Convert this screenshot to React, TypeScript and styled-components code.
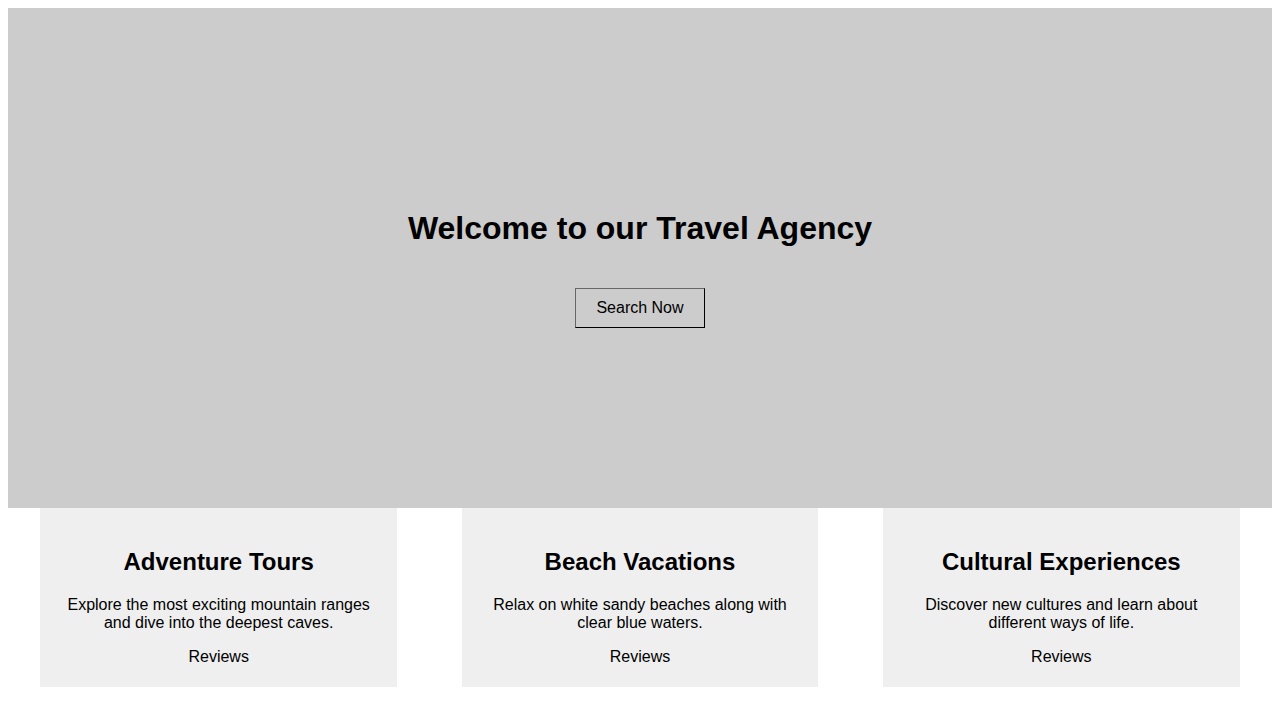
import React from "react";
import styled, { createGlobalStyle } from "styled-components";

const Global = createGlobalStyle`
  body {
    margin: 8px;
    font-family: "Liberation Sans", Arial, sans-serif;
    color: #000;
    background: #fff;
  }
`;

const Hero = styled.section`
  height: 500px;
  background: #cccccc;
  display: flex;
  flex-direction: column;
  align-items: center;
  justify-content: center;
  text-align: center;
`;

const Title = styled.h1`
  font-size: 32px;
  font-weight: bold;
  margin: 21.44px 0;
  line-height: 37px;
`;

const SearchButton = styled.button`
  margin-top: 20px;
  padding: 10px 20px;
  font-family: "Liberation Sans", Arial, sans-serif;
  font-size: 16px;
  line-height: normal;
  color: #000;
  background: transparent;
  border-width: 1px;
  border-style: solid;
  border-color: #666 #000 #000 #666;
  cursor: pointer;
`;

const Cards = styled.section`
  display: flex;
  justify-content: space-around;
`;

const Card = styled.div`
  width: 356.4px;
  box-sizing: border-box;
  padding: 20.5px 20px;
  background: #efefef;
  text-align: center;
`;

const CardTitle = styled.h2`
  font-size: 24px;
  font-weight: bold;
  margin: 19.92px 0;
  line-height: normal;
`;

const CardText = styled.p`
  font-size: 16px;
  line-height: normal;
  margin: 16px 0;
`;

const Reviews = styled.div`
  font-size: 16px;
  line-height: normal;
`;

const items = [
  {
    title: "Adventure Tours",
    text: "Explore the most exciting mountain ranges and dive into the deepest caves.",
  },
  {
    title: "Beach Vacations",
    text: "Relax on white sandy beaches along with clear blue waters.",
  },
  {
    title: "Cultural Experiences",
    text: "Discover new cultures and learn about different ways of life.",
  },
];

export default function App() {
  return (
    <>
      <Global />
      <Hero>
        <Title>Welcome to our Travel Agency</Title>
        <SearchButton>Search Now</SearchButton>
      </Hero>
      <Cards>
        {items.map((it) => (
          <Card key={it.title}>
            <CardTitle>{it.title}</CardTitle>
            <CardText>{it.text}</CardText>
            <Reviews>Reviews</Reviews>
          </Card>
        ))}
      </Cards>
    </>
  );
}
